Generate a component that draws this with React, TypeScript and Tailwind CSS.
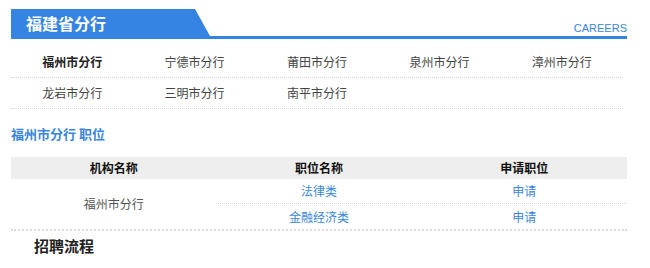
const cities = [
  "福州市分行",
  "宁德市分行",
  "莆田市分行",
  "泉州市分行",
  "漳州市分行",
  "龙岩市分行",
  "三明市分行",
  "南平市分行",
];

const jobs = [{ name: "法律类" }, { name: "金融经济类" }];

const App = () => {
  const rows = [cities.slice(0, 5), cities.slice(5)];

  return (
    <div className="w-[650px] h-[268px] bg-white font-['Noto_Sans_CJK_SC','Noto_Sans',sans-serif] text-[#333]">
      <div className="ml-[11px] w-[616px]">
        {/* HEADER */}
        <div className="flex items-end justify-between pt-[9px] border-b-[3px] border-[#3584e4]">
          <div className="w-[199px] h-[27px] bg-[#3584e4] [clip-path:polygon(0_0,184px_0,100%_100%,0_100%)] pl-[15px] flex items-center">
            <span className="text-white text-[16px] font-bold leading-none">福建省分行</span>
          </div>
          <span className="text-[11px] leading-none pb-[2px] text-[#3a86dd] font-['Liberation_Sans',sans-serif]">
            CAREERS
          </span>
        </div>

        {/* CITIES */}
        <div className="w-[612px] mt-[8px]">
          {rows.map((row, i) => (
            <div key={i} className="grid grid-cols-5 h-[31px] items-center border-b border-dotted border-[#d6d6d6]">
              {row.map((city, j) => (
                <div
                  key={city}
                  className={`text-center text-[12px] ${i === 0 && j === 0 ? "font-bold text-[#222]" : "text-[#444]"}`}
                >
                  {city}
                </div>
              ))}
            </div>
          ))}
        </div>

        {/* TITLE */}
        <h2 className="mt-[15px] text-[13px] leading-[20px] font-bold text-[#3a86dd]">福州市分行 职位</h2>

        {/* TABLE */}
        <div className="mt-[13px]">
          <div className="grid grid-cols-3 h-[22px] items-center bg-[#eeeeee] text-[12px] font-bold text-[#111]">
            <div className="text-center">机构名称</div>
            <div className="text-center">职位名称</div>
            <div className="text-center">申请职位</div>
          </div>
          <div className="flex border-b-2 border-dotted border-[#dcdcdc]">
            <div className="w-1/3 flex items-center justify-center text-[12px] text-[#555]">福州市分行</div>
            <div className="w-2/3">
              {jobs.map((job, i) => (
                <div
                  key={job.name}
                  className={`grid grid-cols-2 items-center text-[12px] text-[#3a86dd] ${i === 0 ? "h-[25px] border-b border-dotted border-[#d6d6d6]" : "h-[25px]"}`}
                >
                  <div className="text-center">{job.name}</div>
                  <div className="text-center">申请</div>
                </div>
              ))}
            </div>
          </div>
        </div>

        {/* PROCESS */}
        <h3 className="mt-[5px] pl-[23px] text-[15px] leading-[20px] font-bold text-[#222]">招聘流程</h3>
      </div>
    </div>
  );
};

export default App;
